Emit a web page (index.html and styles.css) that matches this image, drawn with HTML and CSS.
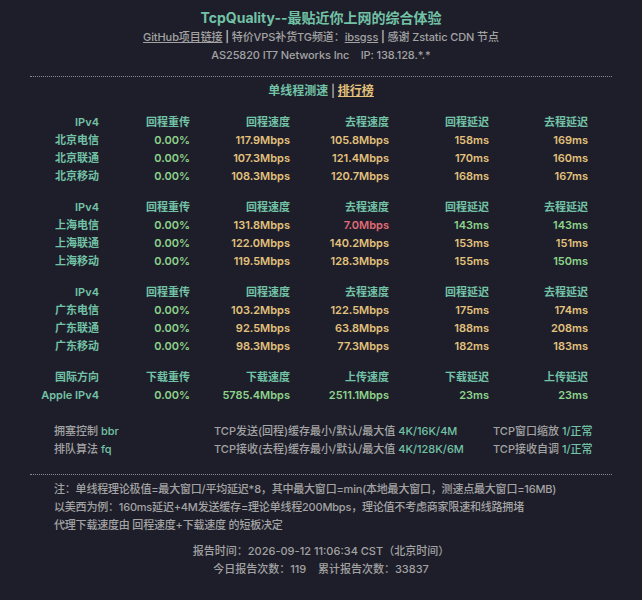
FILE: index.html
```html
<!DOCTYPE html>
<html lang="zh">
<head>
<meta charset="utf-8">
<title>TcpQuality</title>
<link rel="stylesheet" href="styles.css">
</head>
<body>
<div class="page">
  <header class="head">
    <div class="title">TcpQuality--最贴近你上网的综合体验</div>
    <div class="sub"><a class="link">GitHub项目链接</a> <span class="sep">|</span> 特价VPS补货TG频道：<a class="link">ibsgss</a> <span class="sep">|</span> 感谢 Zstatic CDN 节点</div>
    <div class="sub">AS25820 IT7 Networks Inc&nbsp;&nbsp;&nbsp; IP: 138.128.*.*</div>
  </header>
  <div class="dots"></div>
  <nav class="nav"><span class="teal">单线程测速</span> <span class="navsep">|</span> <a class="rank">排行榜</a></nav>

  <section class="grid">
    <div class="h">IPv4</div><div class="h">回程重传</div><div class="h">回程速度</div><div class="h">去程速度</div><div class="h">回程延迟</div><div class="h">去程延迟</div>
    <div class="h">北京电信</div><div class="g">0.00%</div><div class="y">117.9Mbps</div><div class="y">105.8Mbps</div><div class="y">158ms</div><div class="y">169ms</div>
    <div class="h">北京联通</div><div class="g">0.00%</div><div class="y">107.3Mbps</div><div class="y">121.4Mbps</div><div class="y">170ms</div><div class="y">160ms</div>
    <div class="h">北京移动</div><div class="g">0.00%</div><div class="y">108.3Mbps</div><div class="y">120.7Mbps</div><div class="y">168ms</div><div class="y">167ms</div>
  </section>

  <section class="grid">
    <div class="h">IPv4</div><div class="h">回程重传</div><div class="h">回程速度</div><div class="h">去程速度</div><div class="h">回程延迟</div><div class="h">去程延迟</div>
    <div class="h">上海电信</div><div class="g">0.00%</div><div class="y">131.8Mbps</div><div class="r">7.0Mbps</div><div class="g">143ms</div><div class="g">143ms</div>
    <div class="h">上海联通</div><div class="g">0.00%</div><div class="y">122.0Mbps</div><div class="y">140.2Mbps</div><div class="y">153ms</div><div class="y">151ms</div>
    <div class="h">上海移动</div><div class="g">0.00%</div><div class="y">119.5Mbps</div><div class="y">128.3Mbps</div><div class="y">155ms</div><div class="g">150ms</div>
  </section>

  <section class="grid">
    <div class="h">IPv4</div><div class="h">回程重传</div><div class="h">回程速度</div><div class="h">去程速度</div><div class="h">回程延迟</div><div class="h">去程延迟</div>
    <div class="h">广东电信</div><div class="g">0.00%</div><div class="y">103.2Mbps</div><div class="y">122.5Mbps</div><div class="y">175ms</div><div class="y">174ms</div>
    <div class="h">广东联通</div><div class="g">0.00%</div><div class="y">92.5Mbps</div><div class="y">63.8Mbps</div><div class="y">188ms</div><div class="y">208ms</div>
    <div class="h">广东移动</div><div class="g">0.00%</div><div class="y">98.3Mbps</div><div class="y">77.3Mbps</div><div class="y">182ms</div><div class="y">183ms</div>
  </section>

  <section class="grid">
    <div class="h">国际方向</div><div class="h">下载重传</div><div class="h">下载速度</div><div class="h">上传速度</div><div class="h">下载延迟</div><div class="h">上传延迟</div>
    <div class="h">Apple IPv4</div><div class="g">0.00%</div><div class="g">5785.4Mbps</div><div class="g">2511.1Mbps</div><div class="g">23ms</div><div class="g">23ms</div>
  </section>

  <section class="info">
    <div>拥塞控制 <span class="teal">bbr</span></div>
    <div>TCP发送(回程)缓存最小/默认/最大值 <span class="teal">4K/16K/4M</span></div>
    <div>TCP窗口缩放 <span class="teal">1/正常</span></div>
    <div>排队算法 <span class="teal">fq</span></div>
    <div>TCP接收(去程)缓存最小/默认/最大值 <span class="teal">4K/128K/6M</span></div>
    <div>TCP接收自调 <span class="teal">1/正常</span></div>
  </section>

  <div class="dots dots2"></div>

  <section class="notes">
    <p>注：单线程理论极值=最大窗口/平均延迟*8，其中最大窗口=min(本地最大窗口，测速点最大窗口=16MB)</p>
    <p>以美西为例：160ms延迟+4M发送缓存=理论单线程200Mbps，理论值不考虑商家限速和线路拥堵</p>
    <p>代理下载速度由 回程速度+下载速度 的短板决定</p>
  </section>

  <footer class="foot">
    <p>报告时间：2026-09-12 11:06:34 CST（北京时间）</p>
    <p>今日报告次数：119&nbsp;&nbsp;&nbsp; 累计报告次数：33837</p>
  </footer>
</div>
</body>
</html>
```
FILE: styles.css
```css
html, body {
  margin: 0;
  padding: 0;
  background: #1e1e2a;
}
body {
  font-family: "Inter", "Noto Sans CJK SC", sans-serif;
  color: #a3a3a3;
  font-weight: 500;
}
.page {
  width: 642px;
  padding-top: 8px;
}
.head {
  text-align: center;
}
.title {
  font-size: 14px;
  font-weight: 700;
  line-height: 20px;
  color: #72c2a6;
}
.sub {
  font-size: 11px;
  line-height: 18px;
  letter-spacing: -0.1px;
}
.link {
  text-decoration: underline;
  color: #a3a3a3;
}
.sep {
  color: #d0d0d0;
}
.dots {
  margin: 12px 30px 0 30px;
  border-top: 1px dotted #8a8a8a;
  height: 0;
}
.nav {
  margin-top: 5px;
  text-align: center;
  font-size: 12px;
  font-weight: 700;
  line-height: 18px;
}
.teal { color: #72c2a6; }
.navsep { color: #d8d8d8; font-weight: 400; }
.rank {
  color: #e3c27c;
  text-decoration: underline;
}
.grid {
  display: grid;
  grid-template-columns: 99px 91px 100px 99px 100px 99px;
  margin-top: 13px;
  font-size: 11px;
  font-weight: 600;
  line-height: 18px;
  text-align: right;
}
.h { color: #72c2a6; }
.g { color: #8dd38a; }
.y { color: #e3c27c; }
.r { color: #e06c75; }
.info {
  display: grid;
  grid-template-columns: 160px 279px auto;
  padding-left: 54px;
  margin-top: 18px;
  font-size: 11px;
  line-height: 18px;
}
.dots2 {
  margin-top: 16px;
}
.notes {
  padding-left: 54px;
  margin-top: 5px;
  font-size: 11px;
  line-height: 18px;
  letter-spacing: -0.2px;
}
.notes p, .foot p {
  margin: 0;
}
.foot {
  margin-top: 8px;
  text-align: center;
  font-size: 11px;
  line-height: 18px;
}
```
